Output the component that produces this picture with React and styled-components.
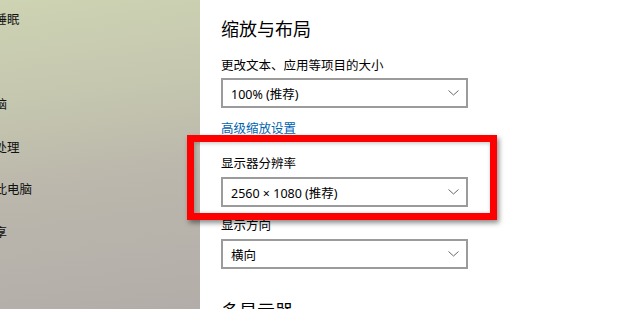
import React from 'react';
import styled, { createGlobalStyle } from 'styled-components';

const GlobalStyle = createGlobalStyle`
  html, body {
    margin: 0;
    padding: 0;
    background: #fff;
    overflow: hidden;
  }
  body {
    font-family: "Noto Sans", "Noto Sans CJK SC", sans-serif;
    color: #000;
  }
`;

const Window = styled.div`
  position: relative;
  width: 620px;
  height: 309px;
  display: flex;
  overflow: hidden;
`;

const Sidebar = styled.div`
  width: 200px;
  flex-shrink: 0;
  overflow: hidden;
  background: linear-gradient(172deg, #ced3b3 0%, #c5c7af 30%, #bbb7ac 58%, #b3ada9 100%);
`;

const NavList = styled.ul`
  list-style: none;
  margin: -3px 0 0 -43px;
  padding: 0;
`;

const NavItem = styled.li`
  height: 42.6px;
  display: flex;
  align-items: center;
  white-space: nowrap;
  font-family: "Noto Sans CJK SC", sans-serif;
  font-size: 12.5px;
  color: #111;
`;

const Content = styled.div`
  flex: 1;
  background: #fff;
  padding-left: 21px;
  display: flex;
  flex-direction: column;
  align-items: flex-start;

  & > * {
    flex-shrink: 0;
  }
`;

const Heading = styled.h2`
  margin: ${p => p.$top}px 0 0;
  font-family: "Noto Sans CJK SC", sans-serif;
  font-weight: 400;
  font-size: 18px;
  line-height: 24px;
  color: #000;
`;

const Label = styled.div`
  margin-top: ${p => p.$top}px;
  font-family: "Noto Sans CJK SC", sans-serif;
  font-size: 12.5px;
  line-height: 18px;
  color: #000;
`;

const Link = styled.a`
  margin-top: ${p => p.$top}px;
  font-family: "Noto Sans CJK SC", sans-serif;
  font-size: 12.5px;
  line-height: 18px;
  color: #0063b1;
  text-decoration: none;
`;

const Select = styled.div`
  margin-top: ${p => p.$top}px;
  box-sizing: border-box;
  width: 247px;
  height: 30px;
  border: 2px solid #9b9b9b;
  background: #fff;
  display: flex;
  align-items: center;
  justify-content: space-between;
  padding: 0 7px 0 8px;
  font-family: "Noto Sans", "Noto Sans CJK SC", sans-serif;
  font-size: 12.5px;
  color: #000;
`;

const Highlight = styled.div`
  position: absolute;
  left: 187px;
  top: 135px;
  width: 310px;
  height: 85px;
  box-sizing: border-box;
  border: 7px solid #ff0000;
  box-shadow: 2px 3px 5px rgba(0, 0, 0, 0.45), inset 1px 1px 4px rgba(0, 0, 0, 0.25);
  pointer-events: none;
`;

const Chevron = () => (
  <svg width="11" height="6" viewBox="0 0 11 6">
    <polyline points="0.5,0.5 5.5,5 10.5,0.5" fill="none" stroke="#6a6a6a" strokeWidth="1" />
  </svg>
);

const Dropdown = ({ value, top }) => (
  <Select $top={top}>
    <span>{value}</span>
    <Chevron />
  </Select>
);

const navItems = ['电源和睡眠', '存储', '平板电脑', '多任务处理', '投影到此电脑', '体验共享', '剪贴板'];

export default function App() {
  return (
    <Window>
      <GlobalStyle />
      <Sidebar>
        <NavList>
          {navItems.map(item => (
            <NavItem key={item}>{item}</NavItem>
          ))}
        </NavList>
      </Sidebar>
      <Content>
        <Heading $top={16}>缩放与布局</Heading>
        <Label $top={16}>更改文本、应用等项目的大小</Label>
        <Dropdown top={4} value="100% (推荐)" />
        <Link $top={10.5}>高级缩放设置</Link>
        <Label $top={17.5}>显示器分辨率</Label>
        <Dropdown top={5} value="2560 × 1080 (推荐)" />
        <Label $top={9}>显示方向</Label>
        <Dropdown top={5} value="横向" />
        <Heading $top={28.5}>多显示器</Heading>
      </Content>
      <Highlight />
    </Window>
  );
}
